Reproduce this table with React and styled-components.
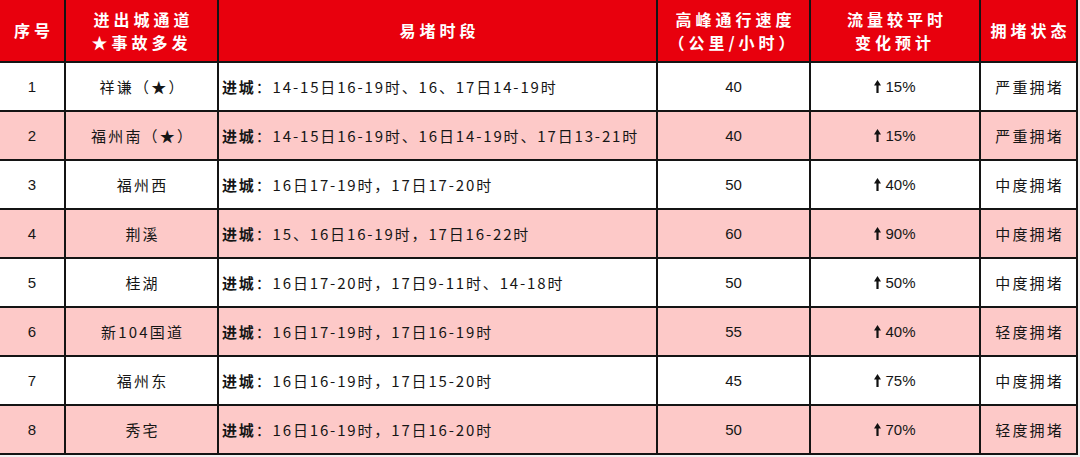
import React from 'react'
import styled, { createGlobalStyle } from 'styled-components'

const GlobalStyle = createGlobalStyle`
    body {
        margin: 0;
        background: #f2f2f2;
        font-family: "Noto Sans CJK SC", sans-serif;
    }
`

const rows = [
    { no: 1, name: '祥谦（★）', time: '14-15日16-19时、16、17日14-19时', speed: 40, rise: '15%', status: '严重拥堵' },
    { no: 2, name: '福州南（★）', time: '14-15日16-19时、16日14-19时、17日13-21时', speed: 40, rise: '15%', status: '严重拥堵' },
    { no: 3, name: '福州西', time: '16日17-19时，17日17-20时', speed: 50, rise: '40%', status: '中度拥堵' },
    { no: 4, name: '荆溪', time: '15、16日16-19时，17日16-22时', speed: 60, rise: '90%', status: '中度拥堵' },
    { no: 5, name: '桂湖', time: '16日17-20时，17日9-11时、14-18时', speed: 50, rise: '50%', status: '中度拥堵' },
    { no: 6, name: '新104国道', time: '16日17-19时，17日16-19时', speed: 55, rise: '40%', status: '轻度拥堵' },
    { no: 7, name: '福州东', time: '16日16-19时，17日15-20时', speed: 45, rise: '75%', status: '中度拥堵' },
    { no: 8, name: '秀宅', time: '16日16-19时，17日16-20时', speed: 50, rise: '70%', status: '轻度拥堵' },
]

function UpArrow() {
    return (
        <svg width="7" height="13" viewBox="0 0 7 13">
            <path d="M3.5 0 L7 5.5 L4.6 5.5 L4.6 13 L2.4 13 L2.4 5.5 L0 5.5 Z" fill="#111" />
        </svg>
    )
}

export default function App() {
    return (
        <>
            <GlobalStyle />
            <Table>
                <Head>序号</Head>
                <Head>进出城通道<br />★事故多发</Head>
                <Head>易堵时段</Head>
                <Head>高峰通行速度<br />（公里/小时）</Head>
                <Head>流量较平时<br />变化预计</Head>
                <Head>拥堵状态</Head>

                {rows.map((r, i) => {
                    const pink = i % 2 === 1
                    return (
                        <React.Fragment key={r.no}>
                            <NumCell $pink={pink}>{r.no}</NumCell>
                            <TextCell $pink={pink}>{r.name}</TextCell>
                            <TimeCell $pink={pink}><b>进城</b>：{r.time}</TimeCell>
                            <NumCell $pink={pink}>{r.speed}</NumCell>
                            <NumCell $pink={pink}><Rise><UpArrow />{r.rise}</Rise></NumCell>
                            <TextCell $pink={pink}>{r.status}</TextCell>
                        </React.Fragment>
                    )
                })}
            </Table>
        </>
    )
}

const Table = styled.div`
    display: grid;
    grid-template-columns: 64px 151px 437px 151px 168px 95px;
    grid-template-rows: 61px repeat(8, 47px);
    gap: 2px;
    padding: 0 2px 2px 0;
    background: #141414;
    width: fit-content;
`

const Head = styled.div`
    background: #e8000d;
    color: #fff;
    font-weight: 700;
    font-size: 16px;
    line-height: 23px;
    letter-spacing: 4px;
    text-indent: 4px;
    display: flex;
    align-items: center;
    justify-content: center;
    text-align: center;
`

const Cell = styled.div`
    background: ${p => (p.$pink ? '#fdc9c8' : '#ffffff')};
    color: #161616;
    display: flex;
    align-items: center;
`

const NumCell = styled(Cell)`
    justify-content: center;
    font-family: "Liberation Sans", "Noto Sans CJK SC", sans-serif;
    font-size: 15px;
`

const TextCell = styled(Cell)`
    justify-content: center;
    font-size: 15px;
    letter-spacing: 2.2px;
    text-indent: 2.2px;
`

const TimeCell = styled(Cell)`
    padding-left: 3px;
    font-size: 15px;
    letter-spacing: 1.85px;

    b {
        font-weight: 700;
    }
`

const Rise = styled.span`
    display: flex;
    align-items: center;
    gap: 4px;
`
